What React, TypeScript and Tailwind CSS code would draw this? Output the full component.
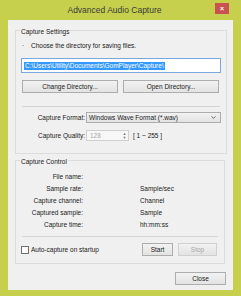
import { ChevronDown } from "lucide-react";

const FONT = "font-['Liberation_Sans',Arial,sans-serif]";

function Btn({ label, w, disabled }: { label: string; w: string; disabled?: boolean }) {
  return (
    <div
      className={`${w} h-[13px] flex items-center justify-center border border-[#adadad] bg-linear-to-b from-[#f2f2f2] to-[#e3e3e3] text-[6.5px] ${
        disabled ? "text-[#a8a8a8] border-[#d0d0d0]" : "text-[#1a1a1a]"
      }`}
    >
      {label}
    </div>
  );
}

function GroupTitle({ text }: { text: string }) {
  return (
    <div className="-mt-[3px] ml-[4px] px-[1px] w-fit h-[8px] leading-[8px] bg-[#f0f0f0] text-[6.5px] text-[#1a1a1a]">
      {text}
    </div>
  );
}

const ROWS = [
  ["File name:", ""],
  ["Sample rate:", "Sample/sec"],
  ["Capture channel:", "Channel"],
  ["Captured sample:", "Sample"],
  ["Capture time:", "hh:mm:ss"],
];

export default function App() {
  return (
    <div className={`w-[241px] h-[300px] bg-white ${FONT}`}>
      <div className="h-[296px] bg-[#c6d04c] flex flex-col">
        {/* title bar */}
        <div className="h-[20px] flex items-start">
          <div className="flex-1 h-[20px] flex items-center justify-center pl-[14px] text-[8.5px] text-[#3a3a3a]">
            Advanced Audio Capture
          </div>
          <div className="mt-[3px] mr-[12px] w-[14px] h-[11px] bg-[#c9514f] flex items-center justify-center text-white text-[7px] font-bold leading-none">
            ×
          </div>
        </div>

        {/* client area */}
        <div className="mx-[8px] h-[270px] bg-[#f0f0f0] flex flex-col text-[6.5px] text-[#1a1a1a]">
          {/* Capture Settings */}
          <div className="mt-[10px] ml-[7px] mr-[6px] h-[124px] border border-[#dcdcdc] flex flex-col">
            <GroupTitle text="Capture Settings" />
            <div className="mt-[6px] h-[8px] leading-[8px] flex items-center">
              <span className="ml-[6px] w-[9px]">·</span>
              <span>Choose the directory for saving files.</span>
            </div>
            <div className="mt-[8px] ml-[5px] w-[200px] h-[15px] border border-[#7aa7e0] bg-white flex items-center">
              <span className="ml-[2px] px-[1px] bg-[#3399ff] text-white leading-[8px] whitespace-nowrap">
                C:\Users\Utility\Documents\GomPlayer\Capture\
              </span>
            </div>
            <div className="mt-[7px] ml-[6px] flex gap-[5px]">
              <Btn label="Change Directory..." w="w-[96px]" />
              <Btn label="Open Directory..." w="w-[96px]" />
            </div>
            <div className="mt-[13px] ml-[6px] w-[198px] h-[1px] bg-[#d5d5d5]" />
            <div className="mt-[5px] flex items-center h-[11px]">
              <div className="w-[70px] text-right pr-[1px]">Capture Format:</div>
              <div className="w-[135px] h-[11px] border border-[#adadad] bg-linear-to-b from-[#f2f2f2] to-[#e3e3e3] flex items-center pl-[2px]">
                <span className="flex-1">Windows Wave Format (*.wav)</span>
                <ChevronDown className="w-[7px] h-[7px] mr-[3px] text-[#404040]" strokeWidth={2.5} />
              </div>
            </div>
            <div className="mt-[7px] flex items-center h-[11px]">
              <div className="w-[70px] text-right pr-[1px]">Capture Quality:</div>
              <div className="w-[43px] h-[11px] border border-[#d0d0d0] bg-[#f7f7f7] flex items-center">
                <span className="flex-1 pl-[3px] text-[#a8a8a8]">128</span>
                <div className="w-[7px] h-[9px] flex flex-col items-center justify-center text-[#7a7a7a] text-[4px] leading-[4px]">
                  <span>▲</span>
                  <span>▼</span>
                </div>
              </div>
              <div className="ml-[4px]">[ 1 ~ 255 ]</div>
            </div>
          </div>

          {/* Capture Control */}
          <div className="mt-[6px] ml-[7px] mr-[8px] h-[104px] border border-[#dcdcdc] flex flex-col">
            <GroupTitle text="Capture Control" />
            <div className="mt-[5px] flex flex-col">
              {ROWS.map(([k, v]) => (
                <div key={k} className="h-[12px] flex items-center">
                  <div className="w-[67px] text-right">{k}</div>
                  <div className="ml-[57px]">{v}</div>
                </div>
              ))}
            </div>
            <div className="mt-[5px] ml-[6px] w-[196px] h-[1px] bg-[#d5d5d5]" />
            <div className="mt-[6px] flex items-center h-[13px]">
              <div className="ml-[5px] w-[8px] h-[8px] border border-[#707070] bg-white" />
              <span className="ml-[2px] flex-1">Auto-capture on startup</span>
              <Btn label="Start" w="w-[31px]" />
              <div className="w-[5px]" />
              <Btn label="Stop" w="w-[39px]" disabled />
              <div className="w-[7px]" />
            </div>
          </div>

          <div className="mt-[8px] flex justify-end pr-[7px]">
            <Btn label="Close" w="w-[51px]" />
          </div>
        </div>
      </div>
    </div>
  );
}
